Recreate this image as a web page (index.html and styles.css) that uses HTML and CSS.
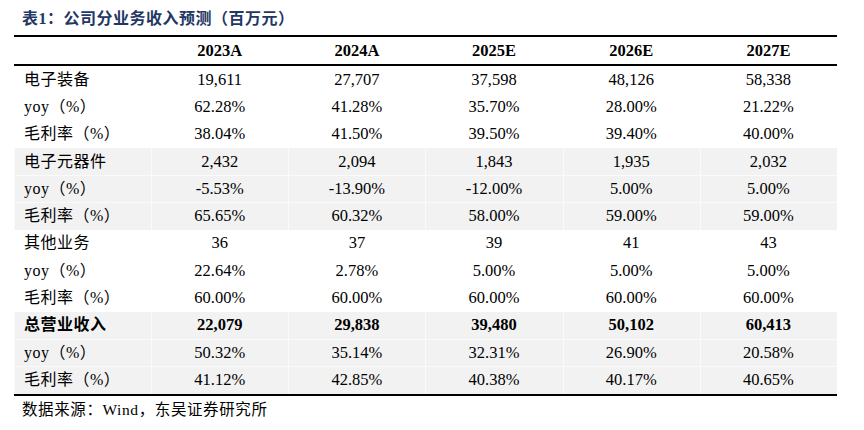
FILE: index.html
```html
<!DOCTYPE html>
<html lang="zh-CN">
<head>
<meta charset="utf-8">
<title>表1：公司分业务收入预测（百万元）</title>
<link rel="stylesheet" href="styles.css">
</head>
<body>
<div class="page">
  <div class="title">表1：公司分业务收入预测（百万元）</div>
  <table class="fin">
    <thead>
      <tr><th class="label"></th><th>2023A</th><th>2024A</th><th>2025E</th><th>2026E</th><th>2027E</th></tr>
    </thead>
    <tbody>
      <tr><td class="label">电子装备</td><td>19,611</td><td>27,707</td><td>37,598</td><td>48,126</td><td>58,338</td></tr>
      <tr><td class="label">yoy（%）</td><td>62.28%</td><td>41.28%</td><td>35.70%</td><td>28.00%</td><td>21.22%</td></tr>
      <tr><td class="label">毛利率（%）</td><td>38.04%</td><td>41.50%</td><td>39.50%</td><td>39.40%</td><td>40.00%</td></tr>
      <tr class="shade"><td class="label">电子元器件</td><td>2,432</td><td>2,094</td><td>1,843</td><td>1,935</td><td>2,032</td></tr>
      <tr class="shade"><td class="label">yoy（%）</td><td>-5.53%</td><td>-13.90%</td><td>-12.00%</td><td>5.00%</td><td>5.00%</td></tr>
      <tr class="shade"><td class="label">毛利率（%）</td><td>65.65%</td><td>60.32%</td><td>58.00%</td><td>59.00%</td><td>59.00%</td></tr>
      <tr><td class="label">其他业务</td><td>36</td><td>37</td><td>39</td><td>41</td><td>43</td></tr>
      <tr><td class="label">yoy（%）</td><td>22.64%</td><td>2.78%</td><td>5.00%</td><td>5.00%</td><td>5.00%</td></tr>
      <tr><td class="label">毛利率（%）</td><td>60.00%</td><td>60.00%</td><td>60.00%</td><td>60.00%</td><td>60.00%</td></tr>
      <tr class="shade total"><td class="label">总营业收入</td><td>22,079</td><td>29,838</td><td>39,480</td><td>50,102</td><td>60,413</td></tr>
      <tr class="shade"><td class="label">yoy（%）</td><td>50.32%</td><td>35.14%</td><td>32.31%</td><td>26.90%</td><td>20.58%</td></tr>
      <tr class="shade last"><td class="label">毛利率（%）</td><td>41.12%</td><td>42.85%</td><td>40.38%</td><td>40.17%</td><td>40.65%</td></tr>
    </tbody>
  </table>
  <div class="source">数据来源：Wind，东吴证券研究所</div>
</div>
</body>
</html>
```

FILE: styles.css
```css
html, body {
  margin: 0;
  padding: 0;
  background: #ffffff;
}

.page {
  padding: 9px 0 0 14px;
  font-family: "Liberation Serif", "Noto Sans CJK SC", serif;
  color: #000;
}

.title {
  margin-left: 8px;
  font-size: 16px;
  line-height: 20px;
  font-weight: bold;
  color: #1f3864;
  letter-spacing: 0.5px;
  height: 26px;
}

.fin {
  width: 823px;
  border-collapse: collapse;
  table-layout: fixed;
  font-size: 16.5px;
}

.fin thead tr {
  border-top: 2px solid #000;
  border-bottom: 2px solid #000;
}

.fin th {
  height: 27px;
  padding: 0;
  font-weight: bold;
  text-align: center;
  vertical-align: middle;
  line-height: 20px;
}

.fin td {
  height: 27.3px;
  padding: 0;
  text-align: center;
  vertical-align: middle;
  line-height: 20px;
}

.fin td.label,
.fin th.label {
  text-align: left;
  padding-left: 10px;
  font-size: 16px;
  letter-spacing: 0.5px;
}

.fin tr.shade td {
  background: #f2f2f2;
  box-shadow: inset 1px 0 0 #fafafa;
}

.fin tr.shade + tr.shade td {
  box-shadow: inset 1px 1px 0 #fafafa;
}

.fin tr.total td {
  font-weight: bold;
}

.fin tr.last {
  border-bottom: 2px solid #000;
}

.source {
  margin: 4px 0 0 8px;
  font-size: 15.5px;
  line-height: 20px;
  letter-spacing: 0.6px;
}
```
